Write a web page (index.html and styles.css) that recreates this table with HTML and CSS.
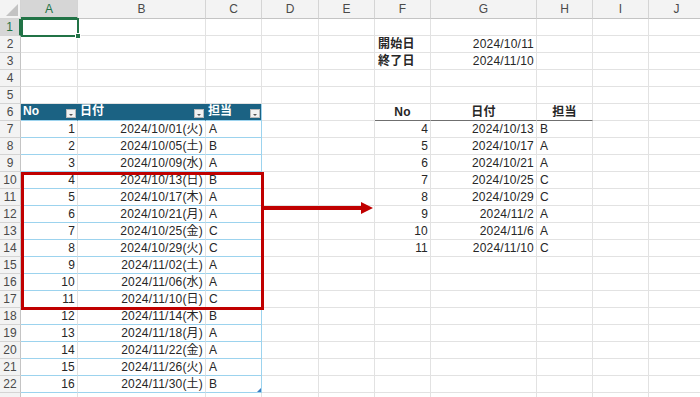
FILE: index.html
```html
<html>
	<head>
		<meta charset="utf-8">
		<link rel="stylesheet" href="styles.css">
	</head>
	<body>
		<div id="sheet" class="sheet"></div>
		<div class="overlay">
			<div class="cursor"></div>
			<div class="frame"></div>
			<svg class="arrow" width="112" height="14" viewBox="0 0 112 14">
				<rect x="0" y="5" width="100" height="4" fill="#c00000"/>
				<polygon points="98,1 110,7 98,13" fill="#c00000"/>
			</svg>
		</div>
		<script>
			var cols = ['A','B','C','D','E','F','G','H','I','J'];
			var cells = {
				F2: {text: '開始日', cls: 'bold'},
				G2: {text: '2024/10/11', cls: 'num'},
				F3: {text: '終了日', cls: 'bold'},
				G3: {text: '2024/11/10', cls: 'num'},
				F6: {text: 'No', cls: 'hd'},
				G6: {text: '日付', cls: 'hd'},
				H6: {text: '担当', cls: 'hd'}
			};
			// table A6:C22
			var list = [
				['2024/10/01(火)','A'],['2024/10/05(土)','B'],['2024/10/09(水)','A'],
				['2024/10/13(日)','B'],['2024/10/17(木)','A'],['2024/10/21(月)','A'],
				['2024/10/25(金)','C'],['2024/10/29(火)','C'],['2024/11/02(土)','A'],
				['2024/11/06(水)','A'],['2024/11/10(日)','C'],['2024/11/14(木)','B'],
				['2024/11/18(月)','A'],['2024/11/22(金)','A'],['2024/11/26(火)','A'],
				['2024/11/30(土)','B']
			];
			cells.A6 = {text: 'No', cls: 'th filter'};
			cells.B6 = {text: '日付', cls: 'th filter'};
			cells.C6 = {text: '担当', cls: 'th filter last'};
			for(i = 0; i < list.length; i++){
				var r = i + 7;
				cells['A' + r] = {text: String(i + 1), cls: 'tb num'};
				cells['B' + r] = {text: list[i][0], cls: 'tb num'};
				cells['C' + r] = {text: list[i][1], cls: 'tb last' + (r == 22 ? ' corner' : '')};
			}
			// filtered result F7:H14
			var picked = [
				[4,'2024/10/13','B'],[5,'2024/10/17','A'],[6,'2024/10/21','A'],
				[7,'2024/10/25','C'],[8,'2024/10/29','C'],[9,'2024/11/2','A'],
				[10,'2024/11/6','A'],[11,'2024/11/10','C']
			];
			for(i = 0; i < picked.length; i++){
				var r = i + 7;
				cells['F' + r] = {text: String(picked[i][0]), cls: 'num'};
				cells['G' + r] = {text: picked[i][1], cls: 'num'};
				cells['H' + r] = {text: picked[i][2], cls: ''};
			}

			var sheet = document.getElementById('sheet');
			var html = '<div class="hcell topleft"><span class="tri"></span></div>';
			for(c = 0; c < cols.length; c++){
				html += '<div class="hcell col' + (c == 0 ? ' sel' : '') + '">' + cols[c] + '</div>';
			}
			// row 23 only peeks in at the bottom edge, so no label
			for(r = 1; r <= 23; r++){
				html += '<div class="hcell row' + (r == 1 ? ' sel' : '') + '">' + (r < 23 ? r : '') + '</div>';
				for(c = 0; c < cols.length; c++){
					var cell = cells[cols[c] + r] || {text: '', cls: ''};
					html += '<div class="cell ' + cell.cls + '">' + cell.text + '</div>';
				}
			}
			sheet.innerHTML = html;
		</script>
	</body>
</html>
```

FILE: styles.css
```css
body {
	margin: 0px;
	overflow: hidden;
	background-color: white;
	font-family: "Liberation Sans", "Noto Sans CJK JP", sans-serif;
	font-size: 12px;
	color: #262626;
}
.sheet {
	display: grid;
	grid-template-columns: 21px 57px 128px 56px 57px 56px 56px 106px 56px 56px 56px;
	grid-template-rows: 19px repeat(23, 17px);
	width: 705px;
}
.hcell {
	box-sizing: border-box;
	background-color: #f3f3f3;
	color: #4a4a4a;
	text-align: center;
	border-right: 1px solid #d4d4d4;
	border-bottom: 1px solid #d4d4d4;
	line-height: 17px;
	font-size: 12px;
}
.hcell.col {
	line-height: 19px;
	border-bottom-color: #c4c4c4;
}
.hcell.row {
	border-right-color: #c4c4c4;
}
.hcell.sel {
	background-color: #d6d6d6;
	color: #217346;
}
.hcell.col.sel {
	border-bottom: 2px solid #217346;
}
.hcell.row.sel {
	border-right: 2px solid #217346;
}
.topleft {
	position: relative;
}
.tri {
	position: absolute;
	right: 2px;
	bottom: 2px;
	width: 0px;
	height: 0px;
	border-left: 12px solid transparent;
	border-bottom: 12px solid #c3c3c3;
}
.cell {
	box-sizing: border-box;
	border-right: 1px solid #e2e2e2;
	border-bottom: 1px solid #e2e2e2;
	line-height: 17px;
	padding: 0px 3px;
	white-space: nowrap;
	overflow: hidden;
	position: relative;
	letter-spacing: 0.2px;
}
.cell.num {
	text-align: right;
	padding-right: 2px;
}
.cell.bold {
	font-weight: bold;
}
.cell.hd {
	font-weight: bold;
	text-align: center;
	border-bottom: 1px solid #6f6f6f;
}
.cell.th {
	background-color: #1b6283;
	color: white;
	font-weight: bold;
	border-right-color: #1b6283;
	border-bottom-color: #9cd3ee;
	line-height: 15px;
	padding-left: 2px;
	letter-spacing: 0px;
}
.cell.th.last {
	border-right-color: #9cd3ee;
}
.cell.filter:after {
	content: "";
	position: absolute;
	right: 1px;
	bottom: 2px;
	width: 8px;
	height: 7px;
	background-color: #f2f2f2;
	border: 1px solid #b9b9b9;
}
.cell.filter:before {
	content: "";
	position: absolute;
	right: 4px;
	bottom: 4px;
	z-index: 2;
	width: 0px;
	height: 0px;
	border-left: 2px solid transparent;
	border-right: 2px solid transparent;
	border-top: 2px solid #555;
}
.cell.tb {
	border-bottom-color: #9cd3ee;
}
.cell.tb.last, .cell.last {
	border-bottom-color: #9cd3ee;
	border-right-color: #9cd3ee;
}
.cell.corner:after {
	content: "";
	position: absolute;
	right: 0px;
	bottom: 0px;
	border-left: 4px solid transparent;
	border-bottom: 4px solid #3b7fc4;
}
.overlay {
	position: absolute;
	left: 0px;
	top: 0px;
}
.cursor {
	position: absolute;
	left: 21px;
	top: 18px;
	width: 54px;
	height: 15px;
	border: 2px solid #217346;
}
.cursor:after {
	content: "";
	position: absolute;
	right: -4px;
	bottom: -4px;
	width: 4px;
	height: 4px;
	background-color: #217346;
	border: 1px solid white;
}
.frame {
	position: absolute;
	left: 21px;
	top: 172px;
	width: 237px;
	height: 132px;
	border: 3px solid #c00000;
}
.arrow {
	position: absolute;
	left: 263px;
	top: 201px;
}
```
